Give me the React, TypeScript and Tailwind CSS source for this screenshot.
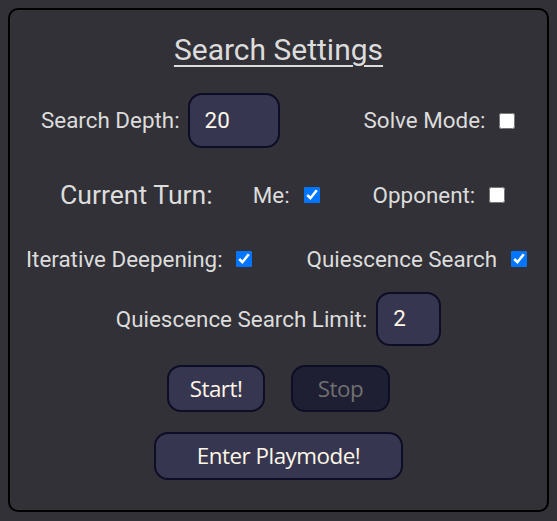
import React from "react";

const label = "text-[22.4px] text-[#dcdcdc] leading-none whitespace-nowrap";
const cb = "m-0 w-4 h-4 shrink-0 accent-[#0075ff]";

export default function App() {
  return (
    <div className="min-h-[521px] w-full bg-[#323137] p-2" style={{ fontFamily: "Roboto, sans-serif" }}>
      <div className="h-[504px] rounded-[10px] border-2 border-black flex flex-col">
        <div className="mt-[20px] h-[40px] flex items-center justify-center">
          <span className="text-[30px] text-[#dcdcdc] underline underline-offset-[5px] decoration-[2px] leading-none">Search Settings</span>
        </div>

        <div className="mt-[23px] h-[55px] flex items-center pl-[31px]">
          <span className={label}>Search Depth:</span>
          <div className="ml-[8px] w-[92px] h-[55px] rounded-[14px] border-2 border-[#0d0d26] bg-[#363650] flex items-center pl-[15px] text-[22.4px] text-[#fff6e6]">20</div>
          <span className={label + " ml-[84px]"}>Solve Mode:</span>
          <input type="checkbox" readOnly className={cb + " ml-[14px]"} />
        </div>

        <div className="mt-[32px] h-[30px] flex items-center pl-[50px]">
          <span className="text-[26.6px] text-[#dcdcdc] leading-none whitespace-nowrap">Current Turn:</span>
          <span className={label + " ml-[40px]"}>Me:</span>
          <input type="checkbox" checked readOnly className={cb + " ml-[14px]"} />
          <span className={label + " ml-[53px]"}>Opponent:</span>
          <input type="checkbox" readOnly className={cb + " ml-[14px]"} />
        </div>

        <div className="mt-[34px] h-[30px] flex items-center pl-[16px]">
          <span className={label}>Iterative Deepening:</span>
          <input type="checkbox" checked readOnly className={cb + " ml-[13px]"} />
          <span className={label + " ml-[55px]"}>Quiescence Search</span>
          <input type="checkbox" checked readOnly className={cb + " ml-[14px]"} />
        </div>

        <div className="mt-[18px] h-[54px] flex items-center justify-center">
          <span className={label}>Quiescence Search Limit:</span>
          <div className="ml-[9px] w-[65px] h-[54px] rounded-[14px] border-2 border-[#0d0d26] bg-[#363650] flex items-center pl-[15px] text-[22.4px] text-[#fff6e6]">2</div>
        </div>

        <div className="mt-[19px] flex justify-center gap-[26px]" style={{ fontFamily: "'Open Sans', sans-serif" }}>
          <button className="w-[98px] h-[47px] rounded-[14px] border-2 border-[#0d0d26] bg-[#363650] text-[22.4px] text-[#fff6e6] tracking-[-0.5px]">Start!</button>
          <button className="w-[99px] h-[47px] rounded-[14px] border-2 border-[#0d0d26] bg-[#1f1f33] text-[22.4px] text-[#6f6f6f] tracking-[-0.5px]">Stop</button>
        </div>

        <div className="mt-[20px] flex justify-center" style={{ fontFamily: "'Open Sans', sans-serif" }}>
          <button className="w-[249px] h-[48px] rounded-[14px] border-2 border-[#0d0d26] bg-[#363650] text-[22.4px] text-[#fff6e6] tracking-[-0.5px]">Enter Playmode!</button>
        </div>
      </div>
    </div>
  );
}
